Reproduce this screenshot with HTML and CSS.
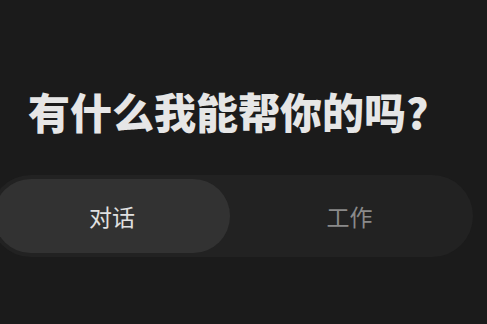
FILE: index.html
```html
<!DOCTYPE html>
<html lang="zh-CN">
<head>
    <meta charset="UTF-8">
    <meta name="viewport" content="width=device-width, initial-scale=1.0">
    <title>有什么我能帮你的吗?</title>
    <link rel="stylesheet" href="styles.css">
</head>
<body>
    <div class="home">
        <h1 class="greeting">有什么我能帮你的吗?</h1>

        <div class="mode-switch">
            <button class="mode-tab active">对话</button>
            <button class="mode-tab">工作</button>
        </div>
    </div>
</body>
</html>
```

FILE: styles.css
```css
* {
    margin: 0;
    padding: 0;
    box-sizing: border-box;
}

body {
    font-family: "Noto Sans CJK SC", "Noto Sans", sans-serif;
    background-color: #1b1b1b;
    color: #e8e8e8;
    overflow: hidden;
}

.home {
    padding-top: 90px;
}

.greeting {
    font-size: 42px;
    line-height: 42px;
    font-weight: 900;
    color: #e6e6e6;
    padding-left: 28px;
    letter-spacing: 0;
}

.mode-switch {
    display: flex;
    width: 483px;
    height: 82px;
    margin-top: 43px;
    margin-left: -10px;
    padding: 4px;
    background: #222222;
    border-radius: 41px;
}

.mode-tab {
    flex: 1;
    border: none;
    background: transparent;
    border-radius: 37px;
    font-family: inherit;
    font-size: 23px;
    color: #8a8a8a;
    cursor: pointer;
}

.mode-tab.active {
    flex: 0 0 236px;
    background: #323232;
    color: #e0e0e0;
}
```
